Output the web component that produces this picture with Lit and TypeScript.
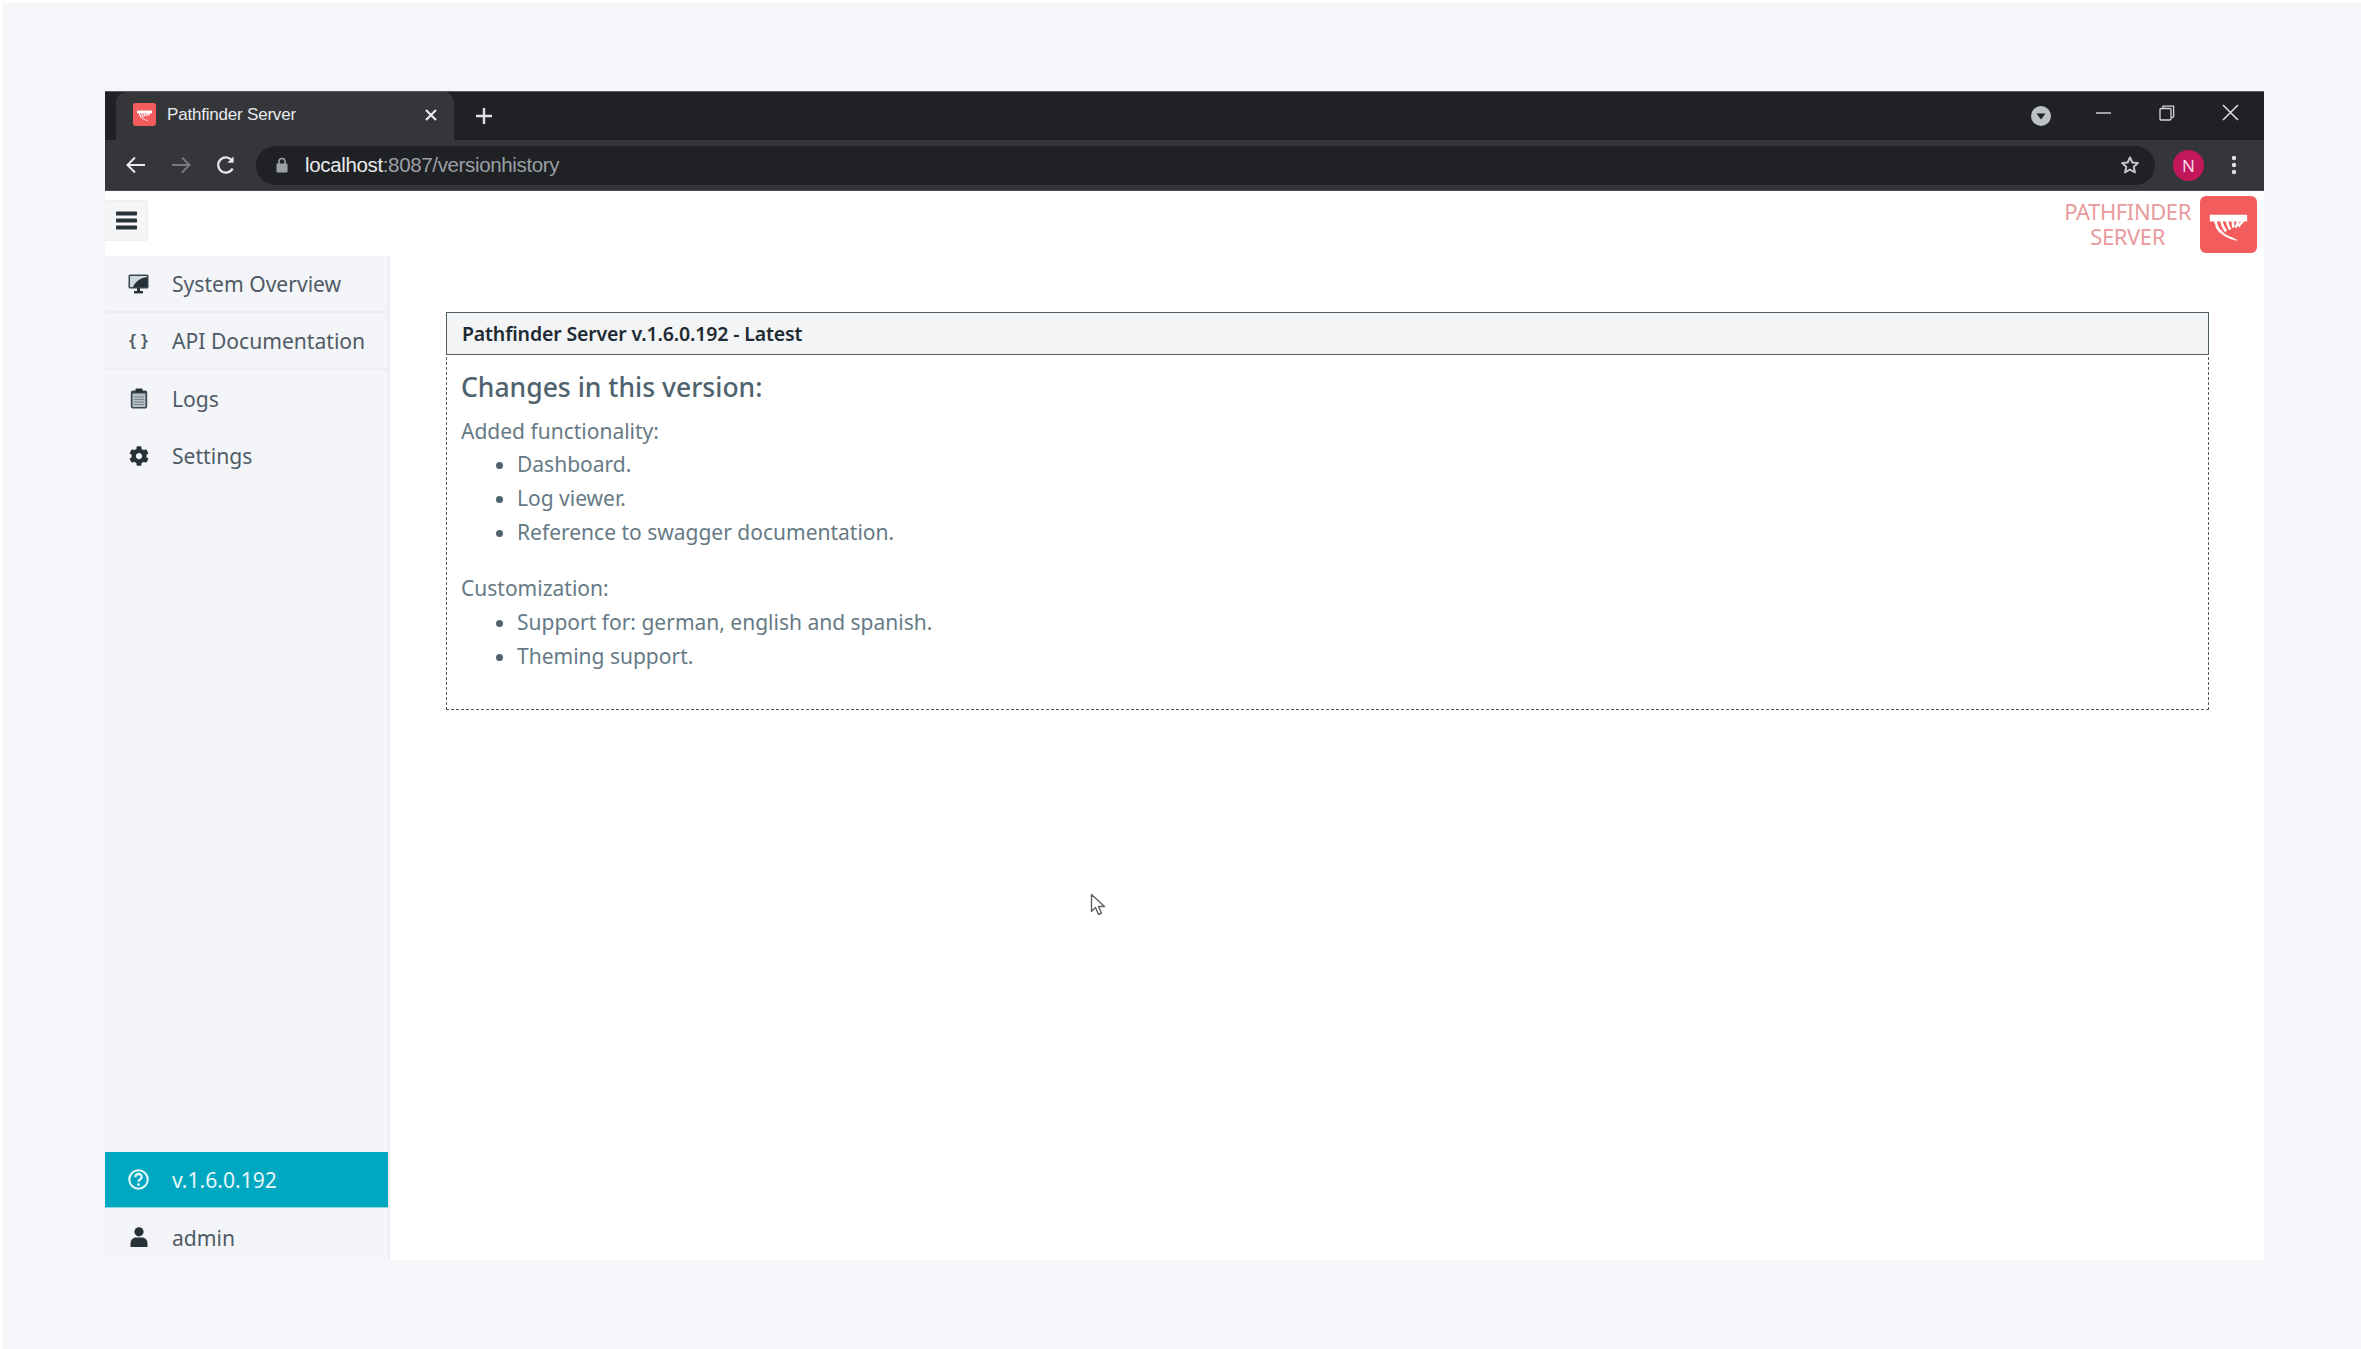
import { LitElement, html, css, svg } from "lit";
import { customElement } from "lit/decorators.js";

const logoMark = svg`
  <path d="M10 19h38v7H10z" fill="#fff"/>
  <g fill="none" stroke="#fff" stroke-width="2.600" stroke-linecap="butt">
    <path d="M15.500 25c1 5 3 9 6 12"/>
    <path d="M21.500 25c1 5 2.500 8 5 11"/>
    <path d="M27.500 25c.5 4 1.500 7 3.500 9"/>
    <path d="M33.500 25c0 3 0 5 .5 7"/>
    <path d="M39 25c-.5 3-1.500 5-3 7"/>
    <path d="M44 25l-5 6"/>
    <path d="M16 31c4 7 12 12 22 14" stroke-width="1.100"/>
    <path d="M21 35c3 4 8 7 14 8.500" stroke-width="1.200"/>
  </g>`;

const cog = "M487.4 315.7l-42.6-24.6c4.3-23.2 4.3-47 0-70.2l42.6-24.6c4.9-2.8 7.1-8.6 5.5-14-11.1-35.6-30-67.8-54.7-94.6-3.8-4.1-10-5.1-14.8-2.3L380.8 110c-17.9-15.4-38.5-27.3-60.8-35.1V25.8c0-5.6-3.9-10.5-9.4-11.7-36.7-8.2-74.3-7.8-109.2 0-5.5 1.2-9.4 6.1-9.4 11.7V75c-22.2 7.9-42.8 19.8-60.8 35.1L88.7 85.5c-4.9-2.8-11-1.9-14.8 2.3-24.7 26.7-43.6 58.9-54.7 94.6-1.7 5.4.6 11.2 5.5 14L67.3 221c-4.3 23.2-4.3 47 0 70.2l-42.6 24.6c-4.9 2.8-7.1 8.6-5.5 14 11.1 35.6 30 67.8 54.7 94.6 3.8 4.1 10 5.1 14.8 2.3l42.6-24.6c17.9 15.4 38.5 27.3 60.8 35.1v49.2c0 5.6 3.9 10.5 9.4 11.7 36.7 8.2 74.3 7.8 109.2 0 5.5-1.2 9.4-6.1 9.4-11.7v-49.2c22.2-7.9 42.8-19.8 60.8-35.1l42.6 24.6c4.9 2.8 11 1.9 14.8-2.3 24.7-26.7 43.6-58.9 54.7-94.6 1.5-5.5-.7-11.3-5.6-14.1zM256 336c-44.1 0-80-35.9-80-80s35.9-80 80-80 80 35.9 80 80-35.9 80-80 80z";

@customElement("app-root")
export class AppRoot extends LitElement {
  static styles = css`
    :host {
      display: block;
      font-family: "Noto Sans", "Open Sans", "Liberation Sans", sans-serif;
    }
    * { box-sizing: border-box; }
    .page {
      height: 1349px;
      background: #f4f6fa;
      border-left: 3px solid #fff;
      border-top: 3px solid #fff;
      padding: 88px 97px 89px 102px;
      display: flex;
      flex-direction: column;
    }
    .strip {
      height: 49px;
      background: #202124;
      border-top: 1px solid #55585c;
      display: flex;
      align-items: flex-end;
      padding-left: 11px;
      color: #e8eaed;
    }
    .tab {
      width: 338px;
      height: 48px;
      background: #35363a;
      border-radius: 10px 10px 0 0;
      display: flex;
      align-items: center;
      padding: 0 16px 3px 17px;
      font-family: "Liberation Sans", sans-serif;
      font-size: 17px;
      gap: 11px;
    }
    .tab .title { flex: 1; letter-spacing: -0.2px; }
    .plus { margin-left: 21px; margin-bottom: 15px; display: flex; }
    .strip-right {
      margin-left: auto;
      display: flex;
      align-items: center;
      align-self: stretch;
      padding-right: 25px;
    }
    .dd { display: flex; }
    .win { display: flex; margin-left: 47px; margin-top: -7px; }
    .win.first { margin-left: 45px; }
    .bar {
      height: 51px;
      background: #35363a;
      border-bottom: 1px solid #4a4b4f;
      display: flex;
      align-items: center;
      padding: 0 27px 0 20px;
    }
    .nav-ic { width: 22px; height: 22px; margin-right: 23px; display: flex; }
    .omni {
      flex: 1;
      height: 39px;
      margin-left: -4px;
      background: #202124;
      border-radius: 20px;
      display: flex;
      align-items: center;
      padding: 0 15px 0 20px;
      font-family: "Liberation Sans", sans-serif;
      font-size: 20.5px;
      letter-spacing: -0.35px;
      color: #9aa0a6;
    }
    .omni .lock { margin-right: 17px; display: flex; }
    .omni b { font-weight: 400; color: #e8eaed; }
    .omni .star { margin-left: auto; display: flex; }
    .avatar {
      width: 31px;
      height: 31px;
      border-radius: 50%;
      background: #c2185b;
      color: #f6d9e6;
      font-size: 17px;
      display: flex;
      align-items: center;
      justify-content: center;
      margin-left: 18px;
    }
    .kebab { margin-left: 27px; display: flex; }
    .app {
      flex: 1;
      background: #fff;
      display: flex;
      flex-direction: column;
      min-height: 0;
      position: relative;
    }
    .top {
      height: 65px;
      display: flex;
      align-items: flex-start;
      justify-content: space-between;
      padding: 9px 7px 0 0;
    }
    .burger {
      width: 43px;
      height: 41px;
      background: #f4f5f7;
      border: 1px solid #eceef0;
      border-left: 0;
      border-radius: 0 3px 3px 0;
      display: flex;
      align-items: center;
      justify-content: center;
    }
    .brand { display: flex; gap: 9px; margin-top: -4px; }
    .brand-text {
      color: #e99a9c;
      font-size: 22px;
      line-height: 25px;
      text-align: center;
      padding-top: 3px;
      letter-spacing: -0.4px;
    }
    .brand svg { display: block; }
    .body { flex: 1; display: flex; min-height: 0; }
    .side {
      width: 285px;
      background: #f4f5f8;
      border-right: 2px solid #ebedf0;
      display: flex;
      flex-direction: column;
      font-size: 21.1px;
      color: #4f5b66;
    }
    .item {
      height: 57px;
      display: flex;
      align-items: center;
    }
    .item.sep { border-bottom: 2px solid #ebedf0; }
    .ic {
      width: 67px;
      display: flex;
      justify-content: center;
      color: #263238;
    }
    .brace {
      font-family: "DejaVu Sans Mono", monospace;
      font-size: 15px;
      font-weight: 700;
      word-spacing: -6px;
      color: #4f5b66;
    }
    .foot { margin-top: auto; }
    .ver { height: 56px; background: #00a7c0; color: #e6f7fa; border-bottom: 1px solid #8fd6e0; }
    .ver .ic { color: #e6f7fa; }
    .adm { height: 52px; padding-top: 6px; }
    .main { flex: 1; padding: 56px 55px 0 56px; }
    .panel { border: 1px dashed #4f5d65; height: 398px; }
    .panel-h {
      height: 43px;
      margin: -1px;
      background: #f3f4f6;
      border: 1px solid #4f5d65;
      padding: 0 15px;
      display: flex;
      align-items: center;
      font-size: 19.5px;
      font-weight: 600;
      color: #1f2b33;
      letter-spacing: -0.15px;
    }
    .panel-b { padding: 14px 14px; color: #667a85; font-size: 21px; line-height: 33.7px; }
    h4 {
      margin: 0 0 8.500px;
      font-size: 26.5px;
      line-height: 38px;
      font-weight: 500;
      color: #4f636e;
    }
    p { margin: 0; }
    ul { margin: 0 0 23px; padding-left: 56px; }
    li::marker { color: #4f636e; }
    .cursor { position: absolute; left: 985px; top: 702px; display: flex; }
  `;

  render() {
    return html`
      <div class="page">
        <div class="strip">
          <div class="tab">
            <svg width="23" height="23" viewBox="0 0 58 58"><rect width="58" height="58" rx="6" fill="#f25c5c"/>${logoMark}</svg>
            <span class="title">Pathfinder Server</span>
            <svg width="14" height="14" viewBox="0 0 14 14"><path d="M2 2l10 10M12 2L2 12" stroke="#e8eaed" stroke-width="2.200"/></svg>
          </div>
          <div class="plus">
            <svg width="18" height="18" viewBox="0 0 18 18"><path d="M9 1v16M1 9h16" stroke="#dfe1e5" stroke-width="2.400"/></svg>
          </div>
          <div class="strip-right">
            <div class="dd">
              <svg width="20" height="20" viewBox="0 0 20 20"><circle cx="10" cy="10" r="10" fill="#bdc1c6"/><path d="M5.500 7.500h9L10 13.500z" fill="#202124"/></svg>
            </div>
            <div class="win first"><svg width="16" height="16" viewBox="0 0 16 16"><path d="M0 8h15" stroke="#bfc2c6" stroke-width="1.600"/></svg></div>
            <div class="win">
              <svg width="16" height="16" viewBox="0 0 16 16" fill="none" stroke="#d5d7da" stroke-width="1.300"><rect x="1" y="3.500" width="11" height="11.500" rx="1"/><path d="M4 3V1.200h10.600v10.600L12.500 13"/></svg>
            </div>
            <div class="win">
              <svg width="17" height="17" viewBox="0 0 17 17"><path d="M1 1l15 15M16 1L1 16" stroke="#e0e2e5" stroke-width="1.500"/></svg>
            </div>
          </div>
        </div>
        <div class="bar">
          <div class="nav-ic"><svg width="22" height="22" viewBox="0 0 22 22" fill="none" stroke="#e8eaed" stroke-width="2"><path d="M20 11H3M10 3.500L2.500 11l7.500 7.500"/></svg></div>
          <div class="nav-ic"><svg width="22" height="22" viewBox="0 0 22 22" fill="none" stroke="#77797d" stroke-width="2"><path d="M2 11h17M12 3.500l7.500 7.500-7.500 7.500"/></svg></div>
          <div class="nav-ic"><svg width="22" height="22" viewBox="0 0 22 22" fill="none" stroke="#e8eaed" stroke-width="2.200"><path d="M17.600 14.500a7.600 7.600 0 1 1-.3-7.500"/><path d="M18.600 2.600v6.200h-6.200z" fill="#e8eaed" stroke="none"/></svg></div>
          <div class="omni">
            <span class="lock"><svg width="12" height="16" viewBox="0 0 12 16"><path d="M3 7V4.500a3 3 0 0 1 6 0V7" fill="none" stroke="#9aa0a6" stroke-width="1.600"/><rect x="0.500" y="6.500" width="11" height="9" rx="1" fill="#9aa0a6"/></svg></span>
            <span><b>localhost</b>:8087/versionhistory</span>
            <span class="star"><svg width="20" height="20" viewBox="0 0 24 24" fill="none" stroke="#c4c7cb" stroke-width="2.400" stroke-linejoin="round"><path d="M12 2.800l2.800 6.200 6.700.7-5 4.500 1.400 6.600-5.900-3.400-5.900 3.400 1.400-6.600-5-4.500 6.700-.7z"/></svg></span>
          </div>
          <div class="avatar">N</div>
          <div class="kebab"><svg width="6" height="20" viewBox="0 0 6 20" fill="#dfe1e5"><circle cx="3" cy="3" r="2.200"/><circle cx="3" cy="10" r="2.200"/><circle cx="3" cy="17" r="2.200"/></svg></div>
        </div>

        <div class="app">
          <div class="top">
            <div class="burger">
              <svg width="21" height="19" viewBox="0 0 21 19" fill="#263238"><rect y="0.500" width="21" height="4" rx=".8"/><rect y="7.500" width="21" height="4" rx=".8"/><rect y="14.500" width="21" height="4" rx=".8"/></svg>
            </div>
            <div class="brand">
              <div class="brand-text">PATHFINDER<br />SERVER</div>
              <svg width="57" height="57" viewBox="0 0 58 58"><rect width="58" height="58" rx="6" fill="#f25c5c"/>${logoMark}</svg>
            </div>
          </div>
          <div class="body">
            <aside class="side">
              <div class="item sep">
                <span class="ic"><svg width="21" height="20" viewBox="0 0 21 20"><rect x="0.500" y="0.500" width="20" height="14" rx="1.500" fill="#37474f"/><rect x="2" y="2" width="17" height="11" fill="#cfd8dc"/><path d="M5 13c2-5 7-9 14-10v10z" fill="#263238"/><rect x="6" y="17" width="9" height="2.400" fill="#263238"/><rect x="9" y="14" width="3" height="4" fill="#263238"/></svg></span>
                <span>System Overview</span>
              </div>
              <div class="item sep">
                <span class="ic brace">{ }</span>
                <span>API Documentation</span>
              </div>
              <div class="item">
                <span class="ic"><svg width="18" height="21" viewBox="0 0 18 21"><rect x="0.800" y="2.500" width="16.400" height="18" rx="2" fill="#37474f"/><rect x="2.500" y="5.500" width="13" height="13.500" fill="#b4bec3"/><path d="M4 9h10M4 11.500h10M4 14h10M4 16.500h10" stroke="#78868d" stroke-width="1"/><rect x="5.500" y="0.500" width="7" height="4" rx="1" fill="#263238"/></svg></span>
                <span>Logs</span>
              </div>
              <div class="item">
                <span class="ic"><svg width="20" height="20" viewBox="0 0 512 512"><path d="${cog}" fill="#263238"/></svg></span>
                <span>Settings</span>
              </div>
              <div class="foot">
                <div class="item ver">
                  <span class="ic"><svg width="21" height="21" viewBox="0 0 20 20" fill="none" stroke="currentColor"><circle cx="10" cy="10" r="8.800" stroke-width="2"/><path d="M7 7.800c0-4 6-4 6-.3 0 2.500-3 2.400-3 4.700" stroke-width="2.200"/><circle cx="10" cy="14.800" r="1.300" fill="currentColor" stroke="none"/></svg></span>
                  <span>v.1.6.0.192</span>
                </div>
                <div class="item adm">
                  <span class="ic"><svg width="18" height="20" viewBox="0 0 18 20" fill="#263238"><circle cx="9" cy="4.800" r="4.600"/><path d="M0.500 20v-3.500c0-3.500 2.500-6 5.500-6h6c3 0 5.500 2.500 5.500 6V20z"/></svg></span>
                  <span>admin</span>
                </div>
              </div>
            </aside>
            <main class="main">
              <section class="panel">
                <div class="panel-h">Pathfinder Server v.1.6.0.192 - Latest</div>
                <div class="panel-b">
                  <h4>Changes in this version:</h4>
                  <p>Added functionality:</p>
                  <ul>
                    <li>Dashboard.</li>
                    <li>Log viewer.</li>
                    <li>Reference to swagger documentation.</li>
                  </ul>
                  <p>Customization:</p>
                  <ul>
                    <li>Support for: german, english and spanish.</li>
                    <li>Theming support.</li>
                  </ul>
                </div>
              </section>
            </main>
          </div>
          <div class="cursor">
            <svg width="17" height="24" viewBox="0 0 17 24"><path d="M1.500 1.500v17l4-4 3 7 3-1.500-3-6.500h6z" fill="#fff" stroke="#5f6368" stroke-width="1.400" stroke-linejoin="round"/></svg>
          </div>
        </div>
      </div>
    `;
  }
}
